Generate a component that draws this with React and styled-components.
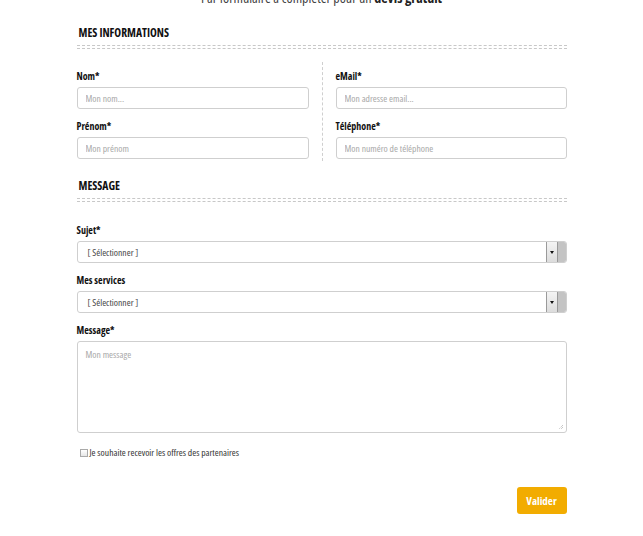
import React from "react";
import styled, { createGlobalStyle } from "styled-components";

const GlobalStyle = createGlobalStyle`
  html, body {
    margin: 0;
    padding: 0;
    background: #fff;
  }
  body {
    font-family: "Open Sans", "Liberation Sans Narrow", "Liberation Sans", sans-serif;
    font-stretch: 75%;
    color: #222;
    overflow: hidden;
  }
`;

const Page = styled.div`
  width: 490px;
  margin: 0 auto;
`;

const Intro = styled.p`
  margin: -11px 0 0;
  text-align: center;
  font-size: 14px;
  line-height: 18px;
  color: #444;

  & b {
    font-weight: 700;
    color: #222;
  }
`;

const SectionHead = styled.div`
  margin-top: ${(p) => p.$top}px;
  padding-left: 2px;
`;

const SectionTitle = styled.h3`
  margin: 0;
  font-size: 11.5px;
  line-height: 14px;
  font-weight: 700;
  text-transform: uppercase;
  color: #111;
`;

const Rule = styled.div`
  margin: 5px 0 0 -2px;
  height: 2px;
  border-top: 1px dashed #c8c8c8;
  border-bottom: 1px dashed #c8c8c8;
`;

const Columns = styled.div`
  display: grid;
  grid-template-columns: 232px 1px 231px;
  column-gap: 13px;
  margin-top: 13px;
`;

const Divider = styled.div`
  border-left: 1px dashed #cfcfcf;
`;

const Column = styled.div`
  display: flex;
  flex-direction: column;
  gap: 10px;
  padding: 7px 0 2px;
`;

const Stack = styled.div`
  display: flex;
  flex-direction: column;
  gap: 10px;
  margin-top: ${(p) => p.$top || 0}px;
`;

const Field = styled.div`
  display: flex;
  flex-direction: column;
`;

const Label = styled.label`
  font-size: 10px;
  line-height: 14px;
  font-weight: 700;
  color: #111;
  margin-bottom: 4px;
`;

const Input = styled.input`
  box-sizing: border-box;
  width: 100%;
  height: 22px;
  border: 1px solid #cfcfcf;
  border-radius: 3px;
  padding: 0 8px;
  font-family: inherit;
  font-stretch: 75%;
  font-size: 9.6px;
  color: #333;
  outline: none;

  &::placeholder {
    color: #a8a8a8;
  }
`;

const SelectBox = styled.div`
  box-sizing: border-box;
  height: 22px;
  border: 1px solid #cfcfcf;
  border-radius: 3px;
  display: flex;
  align-items: center;
  padding-left: 10px;
  font-size: 9.6px;
  color: #444;
  overflow: hidden;
`;

const SelectValue = styled.span`
  flex: 1;
`;

const SelectTrack = styled.span`
  align-self: stretch;
  width: 21px;
  margin: -1px -1px -1px 0;
  background: #c4c4c4;
  border-radius: 0 3px 3px 0;
  display: flex;
`;

const SelectArrow = styled.span`
  width: 10px;
  background: linear-gradient(#f4f4f4, #dcdcdc);
  border: 1px solid #9a9a9a;
  display: flex;
  align-items: center;
  justify-content: center;

  &::after {
    content: "";
    border-left: 2.5px solid transparent;
    border-right: 2.5px solid transparent;
    border-top: 3px solid #111;
  }
`;

const TextArea = styled.div`
  position: relative;
  box-sizing: border-box;
  height: 92px;
  border: 1px solid #cfcfcf;
  border-radius: 3px;
  padding: 6px 8px;
  font-size: 9.6px;
  color: #a8a8a8;
`;

const Grip = styled.svg`
  position: absolute;
  right: 2px;
  bottom: 2px;
`;

const CheckRow = styled.label`
  display: flex;
  align-items: center;
  gap: 2px;
  margin: 13px 0 0 3px;
  font-size: 9.6px;
  color: #333;
`;

const Box = styled.span`
  box-sizing: border-box;
  width: 8px;
  height: 8px;
  border: 1px solid #a9a9a9;
  background: linear-gradient(#fff, #e6e6e6);
`;

const Actions = styled.div`
  display: flex;
  justify-content: flex-end;
  margin-top: 28px;
`;

const Button = styled.button`
  width: 50px;
  height: 27px;
  border: none;
  border-radius: 3px;
  background: #f2ac00;
  color: #fff;
  font-family: inherit;
  font-stretch: 75%;
  font-size: 11px;
  font-weight: 700;
  cursor: pointer;
`;

function Select({ label }) {
  return (
    <Field>
      <Label>{label}</Label>
      <SelectBox>
        <SelectValue>[ Sélectionner ]</SelectValue>
        <SelectTrack>
          <SelectArrow />
        </SelectTrack>
      </SelectBox>
    </Field>
  );
}

export default function App() {
  return (
    <>
      <GlobalStyle />
      <Page>
        <Intro>
          Par formulaire à compléter pour un <b>devis gratuit</b>
        </Intro>

        <SectionHead $top={19}>
          <SectionTitle>Mes informations</SectionTitle>
          <Rule />
        </SectionHead>

        <Columns>
          <Column>
            <Field>
              <Label>Nom*</Label>
              <Input placeholder="Mon nom..." />
            </Field>
            <Field>
              <Label>Prénom*</Label>
              <Input placeholder="Mon prénom" />
            </Field>
          </Column>
          <Divider />
          <Column>
            <Field>
              <Label>eMail*</Label>
              <Input placeholder="Mon adresse email..." />
            </Field>
            <Field>
              <Label>Téléphone*</Label>
              <Input placeholder="Mon numéro de téléphone" />
            </Field>
          </Column>
        </Columns>

        <SectionHead $top={18}>
          <SectionTitle>Message</SectionTitle>
          <Rule />
        </SectionHead>

        <Stack $top={21}>
          <Select label="Sujet*" />
          <Select label="Mes services" />
          <Field>
            <Label>Message*</Label>
            <TextArea>
              Mon message
              <Grip width="6" height="6" viewBox="0 0 6 6">
                <path d="M5 1 L1 5 M5 3 L3 5" stroke="#999" strokeWidth="0.8" strokeDasharray="1 1" />
              </Grip>
            </TextArea>
          </Field>
        </Stack>

        <CheckRow>
          <Box />
          Je souhaite recevoir les offres des partenaires
        </CheckRow>

        <Actions>
          <Button>Valider</Button>
        </Actions>
      </Page>
    </>
  );
}
